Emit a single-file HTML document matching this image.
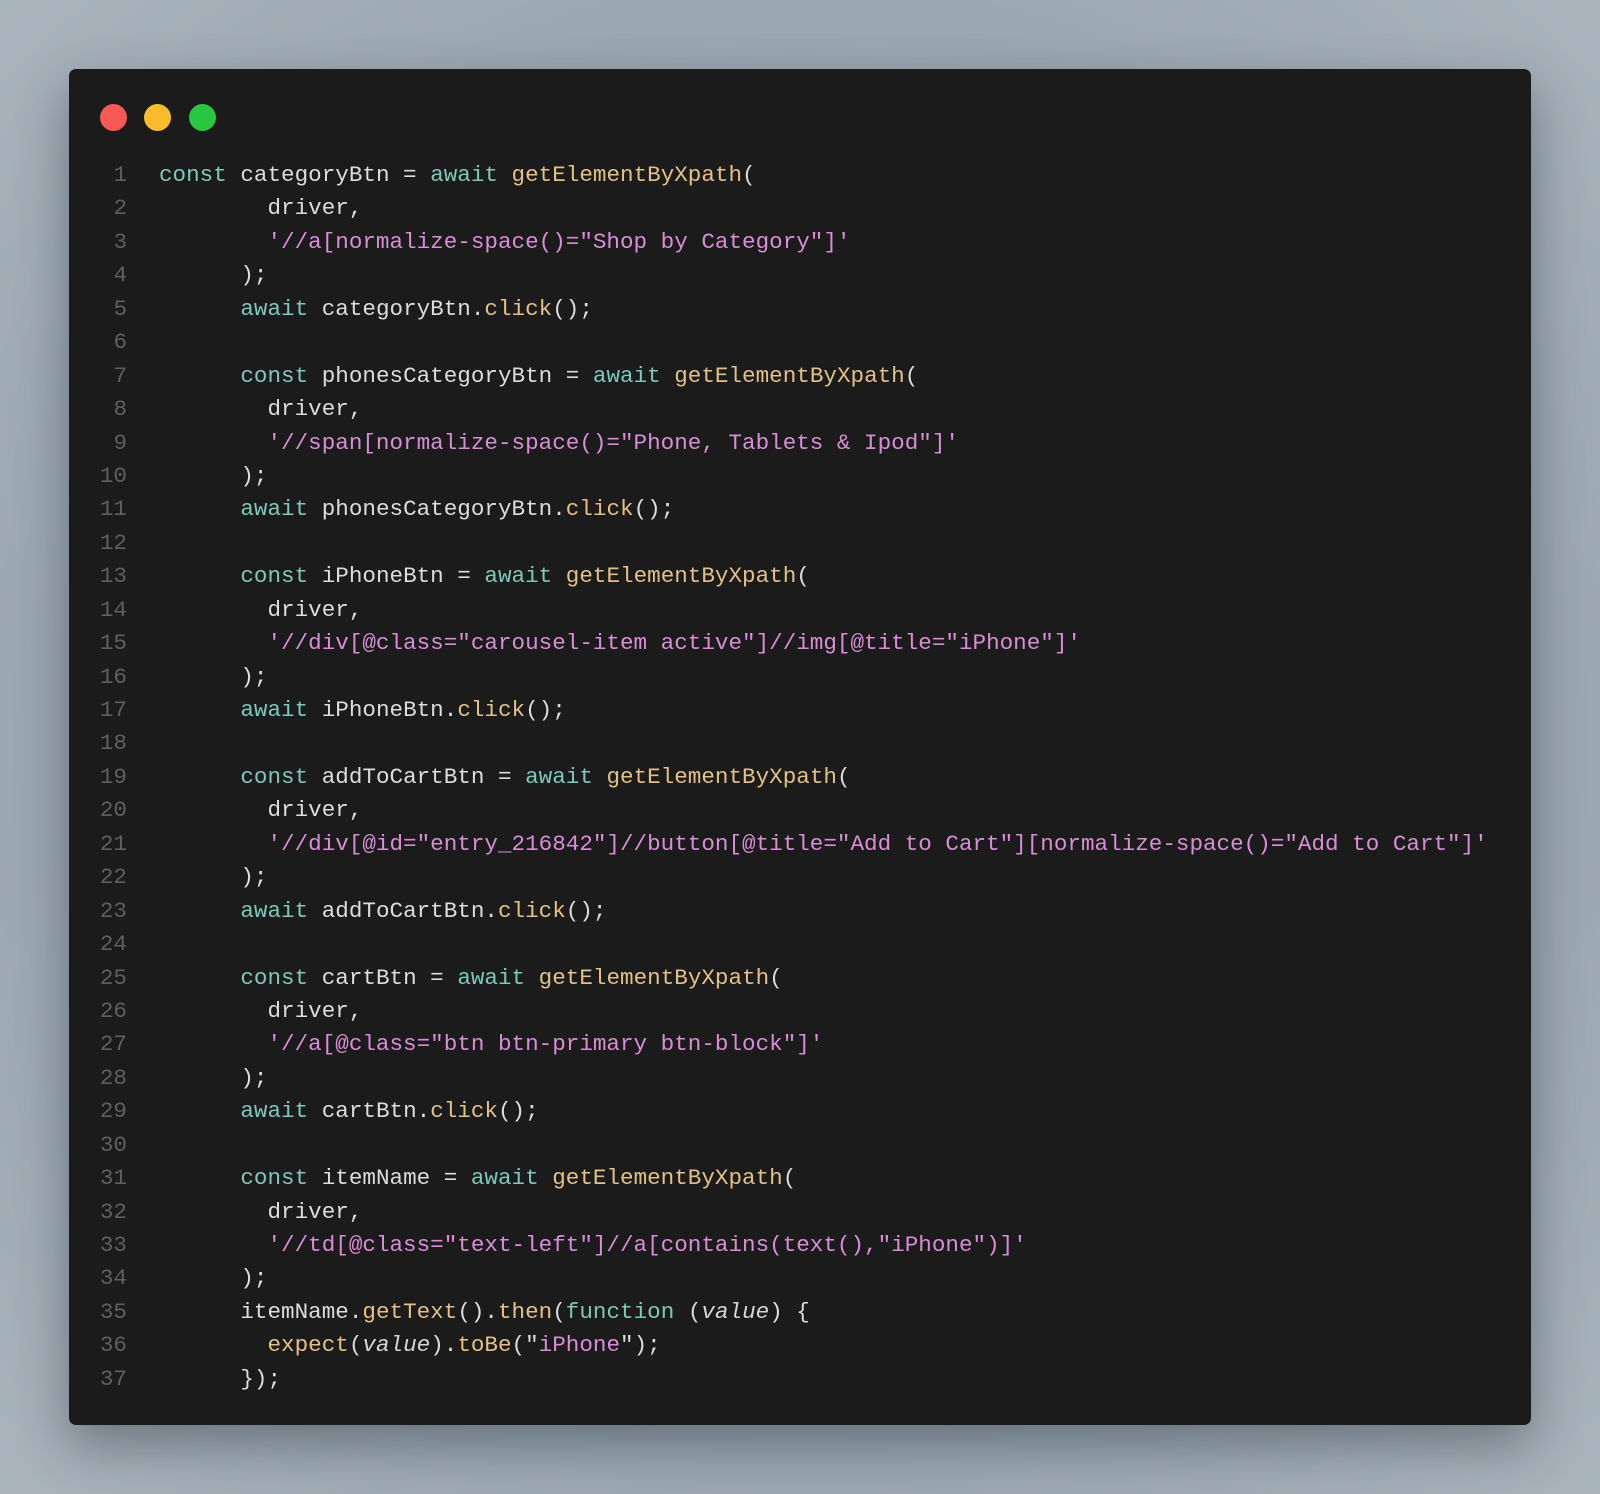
<!DOCTYPE html>
<html><head><meta charset="utf-8"><style>
html,body{margin:0;padding:0;}
body{width:1600px;height:1494px;background:radial-gradient(ellipse at 50% 50%,#8a96a0 0%,#98a4ae 60%,#a9b4bd 100%);position:relative;overflow:hidden;font-family:"Liberation Mono",monospace;}
.win{position:absolute;left:69px;top:69px;width:1462px;height:1356px;background:#1b1b1b;border-radius:7px;box-shadow:0 20px 50px rgba(40,50,60,.45);}
.dot{position:absolute;top:104px;width:27px;height:27px;border-radius:50%;}
pre{position:absolute;left:0;top:159px;margin:0;font-family:"Liberation Mono",monospace;font-size:22.6px;line-height:33.44px;color:#dcdcdc;}
.n{display:inline-block;width:127px;text-align:right;color:#5f5f5f;margin-right:32px;}
.k{color:#7cc9b7}.f{color:#e3c184}.s{color:#d98dd6}.i{font-style:italic;color:#d6d6d6}
</style></head><body>
<div class="win"></div>
<div class="dot" style="left:100px;background:#f75a56"></div>
<div class="dot" style="left:144px;background:#fbbb2d"></div>
<div class="dot" style="left:189px;background:#27c840"></div>
<pre><span class="n">1</span><span class="k">const</span> categoryBtn = <span class="k">await</span> <span class="f">getElementByXpath</span>(
<span class="n">2</span>        driver,
<span class="n">3</span>        <span class="s">'//a[normalize-space()="Shop by Category"]'</span>
<span class="n">4</span>      );
<span class="n">5</span>      <span class="k">await</span> categoryBtn.<span class="f">click</span>();
<span class="n">6</span>
<span class="n">7</span>      <span class="k">const</span> phonesCategoryBtn = <span class="k">await</span> <span class="f">getElementByXpath</span>(
<span class="n">8</span>        driver,
<span class="n">9</span>        <span class="s">'//span[normalize-space()="Phone, Tablets &amp; Ipod"]'</span>
<span class="n">10</span>      );
<span class="n">11</span>      <span class="k">await</span> phonesCategoryBtn.<span class="f">click</span>();
<span class="n">12</span>
<span class="n">13</span>      <span class="k">const</span> iPhoneBtn = <span class="k">await</span> <span class="f">getElementByXpath</span>(
<span class="n">14</span>        driver,
<span class="n">15</span>        <span class="s">'//div[@class="carousel-item active"]//img[@title="iPhone"]'</span>
<span class="n">16</span>      );
<span class="n">17</span>      <span class="k">await</span> iPhoneBtn.<span class="f">click</span>();
<span class="n">18</span>
<span class="n">19</span>      <span class="k">const</span> addToCartBtn = <span class="k">await</span> <span class="f">getElementByXpath</span>(
<span class="n">20</span>        driver,
<span class="n">21</span>        <span class="s">'//div[@id="entry_216842"]//button[@title="Add to Cart"][normalize-space()="Add to Cart"]'</span>
<span class="n">22</span>      );
<span class="n">23</span>      <span class="k">await</span> addToCartBtn.<span class="f">click</span>();
<span class="n">24</span>
<span class="n">25</span>      <span class="k">const</span> cartBtn = <span class="k">await</span> <span class="f">getElementByXpath</span>(
<span class="n">26</span>        driver,
<span class="n">27</span>        <span class="s">'//a[@class="btn btn-primary btn-block"]'</span>
<span class="n">28</span>      );
<span class="n">29</span>      <span class="k">await</span> cartBtn.<span class="f">click</span>();
<span class="n">30</span>
<span class="n">31</span>      <span class="k">const</span> itemName = <span class="k">await</span> <span class="f">getElementByXpath</span>(
<span class="n">32</span>        driver,
<span class="n">33</span>        <span class="s">'//td[@class="text-left"]//a[contains(text(),"iPhone")]'</span>
<span class="n">34</span>      );
<span class="n">35</span>      itemName.<span class="f">getText</span>().<span class="f">then</span>(<span class="k">function</span> (<span class="i">value</span>) {
<span class="n">36</span>        <span class="f">expect</span>(<span class="i">value</span>).<span class="f">toBe</span>("<span class="s">iPhone</span>");
<span class="n">37</span>      });
</pre>
</body></html>
